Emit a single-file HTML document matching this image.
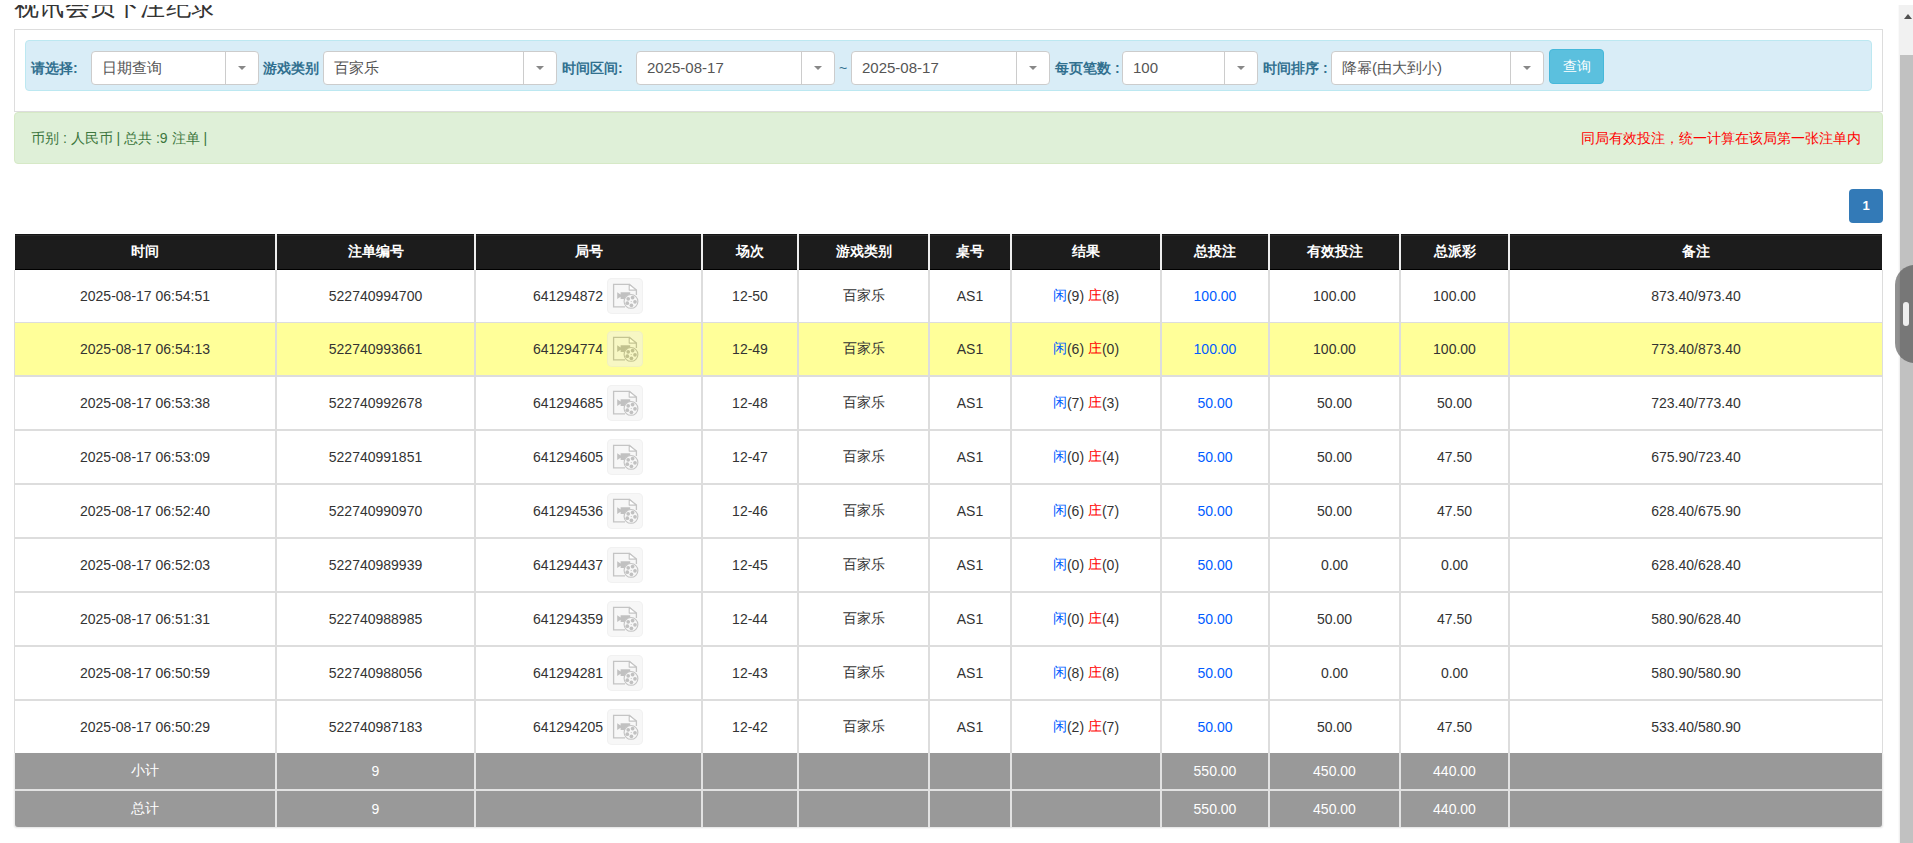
<!DOCTYPE html>
<html><head><meta charset="utf-8"><title>视讯会员下注纪录</title>
<style>
*{box-sizing:border-box;margin:0;padding:0}
html,body{width:1913px;height:843px;overflow:hidden;background:#fff}
body{position:relative;font-family:"Liberation Sans",sans-serif;font-size:14px;color:#333}
.a{position:absolute}
.title{left:14px;top:-9px;font-size:25px;letter-spacing:0.3px;line-height:30px;color:#333;white-space:nowrap}
.topmask{left:0;top:0;width:1898px;height:5px;background:#fff}
.panel{left:14px;top:29px;width:1869px;height:83px;border:1px solid #ddd;background:#fff}
.info{left:25px;top:40px;width:1847px;height:51px;background:#d9edf7;border:1px solid #bce8f1;border-radius:4px}
.lbl{top:60px;font-size:14px;font-weight:bold;color:#31708f;line-height:16px;white-space:nowrap}
.sel{top:51px;height:34px;background:#fff;border:1px solid #ccc;border-radius:4px}
.sel .v{position:absolute;left:10px;top:0;line-height:32px;font-size:15px;color:#555;white-space:nowrap}
.sel .dv{position:absolute;top:0;width:1px;height:32px;background:#ccc}
.sel .ar{position:absolute;top:14px;width:0;height:0;border-left:4px solid transparent;border-right:4px solid transparent;border-top:4px solid #888}
.btn{left:1549px;top:49px;width:55px;height:35px;background:#5bc0de;border:1px solid #46b8da;border-radius:4px;color:#fff;font-size:14px;line-height:33px;text-align:center}
.ok{left:14px;top:112px;width:1869px;height:52px;background:#dff0d8;border:1px solid #d6e9c6;border-radius:4px}
.okt{left:31px;top:129px;font-size:14px;color:#3c763d;line-height:18px;white-space:nowrap}
.red{right:52px;top:129px;font-size:14px;color:#f00;line-height:18px;white-space:nowrap}
.pg{left:1849px;top:189px;width:34px;height:34px;background:#337ab7;border-radius:4px;color:#fff;font-weight:bold;font-size:13px;line-height:34px;text-align:center}
.c{position:absolute;display:flex;align-items:center;justify-content:center;white-space:nowrap}
.hd{background:#1c1c1c;color:#fff;font-weight:bold;font-size:14px;box-shadow:inset 0 1px 0 #151515,inset 0 2px 0 #2a2a2a}
.wh{background:#fff}
.ye{background:#ffff99}
.gy{background:#999;color:#fff}
.bl{color:#005cff}
.rd{color:#f00}
.ic{position:relative;display:inline-block;width:36px;height:36px;margin-left:4px;margin-right:1px;border-radius:5px;background:#f0f0f0;box-shadow:inset 0 0 0 1px #e4e4e4;opacity:.5}
.ic svg{position:absolute;left:0;top:0}
.sb{left:1898px;top:5px;width:15px;height:838px;background:#f1f1f1;border-left:1px solid #fafafa}
.thumb{left:1900px;top:55px;width:13px;height:788px;background:#c1c1c1}
.arrow{left:1904px;top:14px;width:0;height:0;border-left:4.5px solid transparent;border-right:4.5px solid transparent;border-bottom:5px solid #505050}
.handle{left:1895px;top:265px;width:40px;height:98px;border-radius:20px;background:rgba(70,70,70,.6)}
.pill{left:1903px;top:302px;width:6px;height:24px;border-radius:3px;background:#eee}
</style></head><body>

<div class="a title">视讯会员下注纪录</div>
<div class="a topmask"></div>
<div class="a panel"></div>
<div class="a info"></div>
<div class="a lbl" style="left:31px">请选择:</div>
<div class="a lbl" style="left:263px">游戏类别</div>
<div class="a lbl" style="left:562px">时间区间:</div>
<div class="a lbl" style="left:839px;font-weight:normal">~</div>
<div class="a lbl" style="left:1055px">每页笔数 :</div>
<div class="a lbl" style="left:1263px">时间排序 :</div>
<div class="a sel" style="left:91px;width:168px"><span class="v">日期查询</span><span class="dv" style="left:133px"></span><span class="ar" style="left:146px"></span></div>
<div class="a sel" style="left:323px;width:234px"><span class="v">百家乐</span><span class="dv" style="left:199px"></span><span class="ar" style="left:212px"></span></div>
<div class="a sel" style="left:636px;width:199px"><span class="v">2025-08-17</span><span class="dv" style="left:164px"></span><span class="ar" style="left:177px"></span></div>
<div class="a sel" style="left:851px;width:199px"><span class="v">2025-08-17</span><span class="dv" style="left:164px"></span><span class="ar" style="left:177px"></span></div>
<div class="a sel" style="left:1122px;width:136px"><span class="v">100</span><span class="dv" style="left:101px"></span><span class="ar" style="left:114px"></span></div>
<div class="a sel" style="left:1331px;width:213px"><span class="v">降幂(由大到小)</span><span class="dv" style="left:178px"></span><span class="ar" style="left:191px"></span></div>
<div class="a btn">查询</div>
<div class="a ok"></div>
<div class="a okt">币别 : 人民币 | 总共 :9 注单 |</div>
<div class="a red">同局有效投注，统一计算在该局第一张注单内</div>
<div class="a pg">1</div>
<div class="a" style="left:15px;top:234px;width:1867px;height:36px;background:#eee"></div>
<div class="c hd" style="left:15px;top:234px;width:260px;height:36px;border-bottom:1px solid #000">时间</div>
<div class="c hd" style="left:277px;top:234px;width:197px;height:36px;border-bottom:1px solid #000">注单编号</div>
<div class="c hd" style="left:476px;top:234px;width:225px;height:36px;border-bottom:1px solid #000">局号</div>
<div class="c hd" style="left:703px;top:234px;width:94px;height:36px;border-bottom:1px solid #000">场次</div>
<div class="c hd" style="left:799px;top:234px;width:129px;height:36px;border-bottom:1px solid #000">游戏类别</div>
<div class="c hd" style="left:930px;top:234px;width:80px;height:36px;border-bottom:1px solid #000">桌号</div>
<div class="c hd" style="left:1012px;top:234px;width:148px;height:36px;border-bottom:1px solid #000">结果</div>
<div class="c hd" style="left:1162px;top:234px;width:106px;height:36px;border-bottom:1px solid #000">总投注</div>
<div class="c hd" style="left:1270px;top:234px;width:129px;height:36px;border-bottom:1px solid #000">有效投注</div>
<div class="c hd" style="left:1401px;top:234px;width:107px;height:36px;border-bottom:1px solid #000">总派彩</div>
<div class="c hd" style="left:1510px;top:234px;width:372px;height:36px;border-bottom:1px solid #000">备注</div>
<div class="a" style="left:14px;top:270px;width:1869px;height:483px;background:#ddd"></div>
<div class="c wh" style="left:15px;top:270px;width:260px;height:52px;">2025-08-17 06:54:51</div>
<div class="c wh" style="left:277px;top:270px;width:197px;height:52px;">522740994700</div>
<div class="c wh" style="left:476px;top:270px;width:225px;height:52px;">641294872<span class="ic"><svg width="36" height="36" viewBox="0 0 36 36"><path d="M6.6 6.3H22.2L29.4 12.1V28.9H6.6Z" fill="#f0f0f0"/><path d="M18 28.9H6.6V6.3H22.2L29.4 12.1V17" fill="none" stroke="#8a8a8a" stroke-width="1.3"/><path d="M22.2 6.3V12.1H29.4Z" fill="#ffffff" stroke="#8a8a8a" stroke-width="1.1" stroke-linejoin="round"/><path d="M10.2 14.2L13.6 16.4V14.2H23.2V21H13.6V18.8L10.2 21Z" fill="#858585"/><circle cx="24" cy="23.4" r="6.9" fill="#f0f0f0" stroke="#8a8a8a" stroke-width="1.1"/><circle cx="21.2" cy="20.8" r="1.85" fill="#858585"/><circle cx="25.6" cy="19.6" r="1.85" fill="#858585"/><circle cx="28" cy="23.8" r="1.85" fill="#858585"/><circle cx="24.4" cy="27.3" r="1.85" fill="#858585"/><circle cx="20.3" cy="25.2" r="1.85" fill="#858585"/><circle cx="24.2" cy="23.5" r="0.6" fill="#858585"/></svg></span></div>
<div class="c wh" style="left:703px;top:270px;width:94px;height:52px;">12-50</div>
<div class="c wh" style="left:799px;top:270px;width:129px;height:52px;">百家乐</div>
<div class="c wh" style="left:930px;top:270px;width:80px;height:52px;">AS1</div>
<div class="c wh" style="left:1012px;top:270px;width:148px;height:52px;"><span class="bl">闲</span>(9)&nbsp;<span class="rd">庄</span>(8)</div>
<div class="c wh" style="left:1162px;top:270px;width:106px;height:52px;"><span class="bl">100.00</span></div>
<div class="c wh" style="left:1270px;top:270px;width:129px;height:52px;">100.00</div>
<div class="c wh" style="left:1401px;top:270px;width:107px;height:52px;">100.00</div>
<div class="c wh" style="left:1510px;top:270px;width:372px;height:52px;">873.40/973.40</div>
<div class="c ye" style="left:15px;top:323px;width:260px;height:52px;">2025-08-17 06:54:13</div>
<div class="c ye" style="left:277px;top:323px;width:197px;height:52px;">522740993661</div>
<div class="c ye" style="left:476px;top:323px;width:225px;height:52px;">641294774<span class="ic"><svg width="36" height="36" viewBox="0 0 36 36"><path d="M6.6 6.3H22.2L29.4 12.1V28.9H6.6Z" fill="#f0f0f0"/><path d="M18 28.9H6.6V6.3H22.2L29.4 12.1V17" fill="none" stroke="#8a8a8a" stroke-width="1.3"/><path d="M22.2 6.3V12.1H29.4Z" fill="#ffffff" stroke="#8a8a8a" stroke-width="1.1" stroke-linejoin="round"/><path d="M10.2 14.2L13.6 16.4V14.2H23.2V21H13.6V18.8L10.2 21Z" fill="#858585"/><circle cx="24" cy="23.4" r="6.9" fill="#f0f0f0" stroke="#8a8a8a" stroke-width="1.1"/><circle cx="21.2" cy="20.8" r="1.85" fill="#858585"/><circle cx="25.6" cy="19.6" r="1.85" fill="#858585"/><circle cx="28" cy="23.8" r="1.85" fill="#858585"/><circle cx="24.4" cy="27.3" r="1.85" fill="#858585"/><circle cx="20.3" cy="25.2" r="1.85" fill="#858585"/><circle cx="24.2" cy="23.5" r="0.6" fill="#858585"/></svg></span></div>
<div class="c ye" style="left:703px;top:323px;width:94px;height:52px;">12-49</div>
<div class="c ye" style="left:799px;top:323px;width:129px;height:52px;">百家乐</div>
<div class="c ye" style="left:930px;top:323px;width:80px;height:52px;">AS1</div>
<div class="c ye" style="left:1012px;top:323px;width:148px;height:52px;"><span class="bl">闲</span>(6)&nbsp;<span class="rd">庄</span>(0)</div>
<div class="c ye" style="left:1162px;top:323px;width:106px;height:52px;"><span class="bl">100.00</span></div>
<div class="c ye" style="left:1270px;top:323px;width:129px;height:52px;">100.00</div>
<div class="c ye" style="left:1401px;top:323px;width:107px;height:52px;">100.00</div>
<div class="c ye" style="left:1510px;top:323px;width:372px;height:52px;">773.40/873.40</div>
<div class="c wh" style="left:15px;top:377px;width:260px;height:52px;">2025-08-17 06:53:38</div>
<div class="c wh" style="left:277px;top:377px;width:197px;height:52px;">522740992678</div>
<div class="c wh" style="left:476px;top:377px;width:225px;height:52px;">641294685<span class="ic"><svg width="36" height="36" viewBox="0 0 36 36"><path d="M6.6 6.3H22.2L29.4 12.1V28.9H6.6Z" fill="#f0f0f0"/><path d="M18 28.9H6.6V6.3H22.2L29.4 12.1V17" fill="none" stroke="#8a8a8a" stroke-width="1.3"/><path d="M22.2 6.3V12.1H29.4Z" fill="#ffffff" stroke="#8a8a8a" stroke-width="1.1" stroke-linejoin="round"/><path d="M10.2 14.2L13.6 16.4V14.2H23.2V21H13.6V18.8L10.2 21Z" fill="#858585"/><circle cx="24" cy="23.4" r="6.9" fill="#f0f0f0" stroke="#8a8a8a" stroke-width="1.1"/><circle cx="21.2" cy="20.8" r="1.85" fill="#858585"/><circle cx="25.6" cy="19.6" r="1.85" fill="#858585"/><circle cx="28" cy="23.8" r="1.85" fill="#858585"/><circle cx="24.4" cy="27.3" r="1.85" fill="#858585"/><circle cx="20.3" cy="25.2" r="1.85" fill="#858585"/><circle cx="24.2" cy="23.5" r="0.6" fill="#858585"/></svg></span></div>
<div class="c wh" style="left:703px;top:377px;width:94px;height:52px;">12-48</div>
<div class="c wh" style="left:799px;top:377px;width:129px;height:52px;">百家乐</div>
<div class="c wh" style="left:930px;top:377px;width:80px;height:52px;">AS1</div>
<div class="c wh" style="left:1012px;top:377px;width:148px;height:52px;"><span class="bl">闲</span>(7)&nbsp;<span class="rd">庄</span>(3)</div>
<div class="c wh" style="left:1162px;top:377px;width:106px;height:52px;"><span class="bl">50.00</span></div>
<div class="c wh" style="left:1270px;top:377px;width:129px;height:52px;">50.00</div>
<div class="c wh" style="left:1401px;top:377px;width:107px;height:52px;">50.00</div>
<div class="c wh" style="left:1510px;top:377px;width:372px;height:52px;">723.40/773.40</div>
<div class="c wh" style="left:15px;top:431px;width:260px;height:52px;">2025-08-17 06:53:09</div>
<div class="c wh" style="left:277px;top:431px;width:197px;height:52px;">522740991851</div>
<div class="c wh" style="left:476px;top:431px;width:225px;height:52px;">641294605<span class="ic"><svg width="36" height="36" viewBox="0 0 36 36"><path d="M6.6 6.3H22.2L29.4 12.1V28.9H6.6Z" fill="#f0f0f0"/><path d="M18 28.9H6.6V6.3H22.2L29.4 12.1V17" fill="none" stroke="#8a8a8a" stroke-width="1.3"/><path d="M22.2 6.3V12.1H29.4Z" fill="#ffffff" stroke="#8a8a8a" stroke-width="1.1" stroke-linejoin="round"/><path d="M10.2 14.2L13.6 16.4V14.2H23.2V21H13.6V18.8L10.2 21Z" fill="#858585"/><circle cx="24" cy="23.4" r="6.9" fill="#f0f0f0" stroke="#8a8a8a" stroke-width="1.1"/><circle cx="21.2" cy="20.8" r="1.85" fill="#858585"/><circle cx="25.6" cy="19.6" r="1.85" fill="#858585"/><circle cx="28" cy="23.8" r="1.85" fill="#858585"/><circle cx="24.4" cy="27.3" r="1.85" fill="#858585"/><circle cx="20.3" cy="25.2" r="1.85" fill="#858585"/><circle cx="24.2" cy="23.5" r="0.6" fill="#858585"/></svg></span></div>
<div class="c wh" style="left:703px;top:431px;width:94px;height:52px;">12-47</div>
<div class="c wh" style="left:799px;top:431px;width:129px;height:52px;">百家乐</div>
<div class="c wh" style="left:930px;top:431px;width:80px;height:52px;">AS1</div>
<div class="c wh" style="left:1012px;top:431px;width:148px;height:52px;"><span class="bl">闲</span>(0)&nbsp;<span class="rd">庄</span>(4)</div>
<div class="c wh" style="left:1162px;top:431px;width:106px;height:52px;"><span class="bl">50.00</span></div>
<div class="c wh" style="left:1270px;top:431px;width:129px;height:52px;">50.00</div>
<div class="c wh" style="left:1401px;top:431px;width:107px;height:52px;">47.50</div>
<div class="c wh" style="left:1510px;top:431px;width:372px;height:52px;">675.90/723.40</div>
<div class="c wh" style="left:15px;top:485px;width:260px;height:52px;">2025-08-17 06:52:40</div>
<div class="c wh" style="left:277px;top:485px;width:197px;height:52px;">522740990970</div>
<div class="c wh" style="left:476px;top:485px;width:225px;height:52px;">641294536<span class="ic"><svg width="36" height="36" viewBox="0 0 36 36"><path d="M6.6 6.3H22.2L29.4 12.1V28.9H6.6Z" fill="#f0f0f0"/><path d="M18 28.9H6.6V6.3H22.2L29.4 12.1V17" fill="none" stroke="#8a8a8a" stroke-width="1.3"/><path d="M22.2 6.3V12.1H29.4Z" fill="#ffffff" stroke="#8a8a8a" stroke-width="1.1" stroke-linejoin="round"/><path d="M10.2 14.2L13.6 16.4V14.2H23.2V21H13.6V18.8L10.2 21Z" fill="#858585"/><circle cx="24" cy="23.4" r="6.9" fill="#f0f0f0" stroke="#8a8a8a" stroke-width="1.1"/><circle cx="21.2" cy="20.8" r="1.85" fill="#858585"/><circle cx="25.6" cy="19.6" r="1.85" fill="#858585"/><circle cx="28" cy="23.8" r="1.85" fill="#858585"/><circle cx="24.4" cy="27.3" r="1.85" fill="#858585"/><circle cx="20.3" cy="25.2" r="1.85" fill="#858585"/><circle cx="24.2" cy="23.5" r="0.6" fill="#858585"/></svg></span></div>
<div class="c wh" style="left:703px;top:485px;width:94px;height:52px;">12-46</div>
<div class="c wh" style="left:799px;top:485px;width:129px;height:52px;">百家乐</div>
<div class="c wh" style="left:930px;top:485px;width:80px;height:52px;">AS1</div>
<div class="c wh" style="left:1012px;top:485px;width:148px;height:52px;"><span class="bl">闲</span>(6)&nbsp;<span class="rd">庄</span>(7)</div>
<div class="c wh" style="left:1162px;top:485px;width:106px;height:52px;"><span class="bl">50.00</span></div>
<div class="c wh" style="left:1270px;top:485px;width:129px;height:52px;">50.00</div>
<div class="c wh" style="left:1401px;top:485px;width:107px;height:52px;">47.50</div>
<div class="c wh" style="left:1510px;top:485px;width:372px;height:52px;">628.40/675.90</div>
<div class="c wh" style="left:15px;top:539px;width:260px;height:52px;">2025-08-17 06:52:03</div>
<div class="c wh" style="left:277px;top:539px;width:197px;height:52px;">522740989939</div>
<div class="c wh" style="left:476px;top:539px;width:225px;height:52px;">641294437<span class="ic"><svg width="36" height="36" viewBox="0 0 36 36"><path d="M6.6 6.3H22.2L29.4 12.1V28.9H6.6Z" fill="#f0f0f0"/><path d="M18 28.9H6.6V6.3H22.2L29.4 12.1V17" fill="none" stroke="#8a8a8a" stroke-width="1.3"/><path d="M22.2 6.3V12.1H29.4Z" fill="#ffffff" stroke="#8a8a8a" stroke-width="1.1" stroke-linejoin="round"/><path d="M10.2 14.2L13.6 16.4V14.2H23.2V21H13.6V18.8L10.2 21Z" fill="#858585"/><circle cx="24" cy="23.4" r="6.9" fill="#f0f0f0" stroke="#8a8a8a" stroke-width="1.1"/><circle cx="21.2" cy="20.8" r="1.85" fill="#858585"/><circle cx="25.6" cy="19.6" r="1.85" fill="#858585"/><circle cx="28" cy="23.8" r="1.85" fill="#858585"/><circle cx="24.4" cy="27.3" r="1.85" fill="#858585"/><circle cx="20.3" cy="25.2" r="1.85" fill="#858585"/><circle cx="24.2" cy="23.5" r="0.6" fill="#858585"/></svg></span></div>
<div class="c wh" style="left:703px;top:539px;width:94px;height:52px;">12-45</div>
<div class="c wh" style="left:799px;top:539px;width:129px;height:52px;">百家乐</div>
<div class="c wh" style="left:930px;top:539px;width:80px;height:52px;">AS1</div>
<div class="c wh" style="left:1012px;top:539px;width:148px;height:52px;"><span class="bl">闲</span>(0)&nbsp;<span class="rd">庄</span>(0)</div>
<div class="c wh" style="left:1162px;top:539px;width:106px;height:52px;"><span class="bl">50.00</span></div>
<div class="c wh" style="left:1270px;top:539px;width:129px;height:52px;">0.00</div>
<div class="c wh" style="left:1401px;top:539px;width:107px;height:52px;">0.00</div>
<div class="c wh" style="left:1510px;top:539px;width:372px;height:52px;">628.40/628.40</div>
<div class="c wh" style="left:15px;top:593px;width:260px;height:52px;">2025-08-17 06:51:31</div>
<div class="c wh" style="left:277px;top:593px;width:197px;height:52px;">522740988985</div>
<div class="c wh" style="left:476px;top:593px;width:225px;height:52px;">641294359<span class="ic"><svg width="36" height="36" viewBox="0 0 36 36"><path d="M6.6 6.3H22.2L29.4 12.1V28.9H6.6Z" fill="#f0f0f0"/><path d="M18 28.9H6.6V6.3H22.2L29.4 12.1V17" fill="none" stroke="#8a8a8a" stroke-width="1.3"/><path d="M22.2 6.3V12.1H29.4Z" fill="#ffffff" stroke="#8a8a8a" stroke-width="1.1" stroke-linejoin="round"/><path d="M10.2 14.2L13.6 16.4V14.2H23.2V21H13.6V18.8L10.2 21Z" fill="#858585"/><circle cx="24" cy="23.4" r="6.9" fill="#f0f0f0" stroke="#8a8a8a" stroke-width="1.1"/><circle cx="21.2" cy="20.8" r="1.85" fill="#858585"/><circle cx="25.6" cy="19.6" r="1.85" fill="#858585"/><circle cx="28" cy="23.8" r="1.85" fill="#858585"/><circle cx="24.4" cy="27.3" r="1.85" fill="#858585"/><circle cx="20.3" cy="25.2" r="1.85" fill="#858585"/><circle cx="24.2" cy="23.5" r="0.6" fill="#858585"/></svg></span></div>
<div class="c wh" style="left:703px;top:593px;width:94px;height:52px;">12-44</div>
<div class="c wh" style="left:799px;top:593px;width:129px;height:52px;">百家乐</div>
<div class="c wh" style="left:930px;top:593px;width:80px;height:52px;">AS1</div>
<div class="c wh" style="left:1012px;top:593px;width:148px;height:52px;"><span class="bl">闲</span>(0)&nbsp;<span class="rd">庄</span>(4)</div>
<div class="c wh" style="left:1162px;top:593px;width:106px;height:52px;"><span class="bl">50.00</span></div>
<div class="c wh" style="left:1270px;top:593px;width:129px;height:52px;">50.00</div>
<div class="c wh" style="left:1401px;top:593px;width:107px;height:52px;">47.50</div>
<div class="c wh" style="left:1510px;top:593px;width:372px;height:52px;">580.90/628.40</div>
<div class="c wh" style="left:15px;top:647px;width:260px;height:52px;">2025-08-17 06:50:59</div>
<div class="c wh" style="left:277px;top:647px;width:197px;height:52px;">522740988056</div>
<div class="c wh" style="left:476px;top:647px;width:225px;height:52px;">641294281<span class="ic"><svg width="36" height="36" viewBox="0 0 36 36"><path d="M6.6 6.3H22.2L29.4 12.1V28.9H6.6Z" fill="#f0f0f0"/><path d="M18 28.9H6.6V6.3H22.2L29.4 12.1V17" fill="none" stroke="#8a8a8a" stroke-width="1.3"/><path d="M22.2 6.3V12.1H29.4Z" fill="#ffffff" stroke="#8a8a8a" stroke-width="1.1" stroke-linejoin="round"/><path d="M10.2 14.2L13.6 16.4V14.2H23.2V21H13.6V18.8L10.2 21Z" fill="#858585"/><circle cx="24" cy="23.4" r="6.9" fill="#f0f0f0" stroke="#8a8a8a" stroke-width="1.1"/><circle cx="21.2" cy="20.8" r="1.85" fill="#858585"/><circle cx="25.6" cy="19.6" r="1.85" fill="#858585"/><circle cx="28" cy="23.8" r="1.85" fill="#858585"/><circle cx="24.4" cy="27.3" r="1.85" fill="#858585"/><circle cx="20.3" cy="25.2" r="1.85" fill="#858585"/><circle cx="24.2" cy="23.5" r="0.6" fill="#858585"/></svg></span></div>
<div class="c wh" style="left:703px;top:647px;width:94px;height:52px;">12-43</div>
<div class="c wh" style="left:799px;top:647px;width:129px;height:52px;">百家乐</div>
<div class="c wh" style="left:930px;top:647px;width:80px;height:52px;">AS1</div>
<div class="c wh" style="left:1012px;top:647px;width:148px;height:52px;"><span class="bl">闲</span>(8)&nbsp;<span class="rd">庄</span>(8)</div>
<div class="c wh" style="left:1162px;top:647px;width:106px;height:52px;"><span class="bl">50.00</span></div>
<div class="c wh" style="left:1270px;top:647px;width:129px;height:52px;">0.00</div>
<div class="c wh" style="left:1401px;top:647px;width:107px;height:52px;">0.00</div>
<div class="c wh" style="left:1510px;top:647px;width:372px;height:52px;">580.90/580.90</div>
<div class="c wh" style="left:15px;top:701px;width:260px;height:52px;">2025-08-17 06:50:29</div>
<div class="c wh" style="left:277px;top:701px;width:197px;height:52px;">522740987183</div>
<div class="c wh" style="left:476px;top:701px;width:225px;height:52px;">641294205<span class="ic"><svg width="36" height="36" viewBox="0 0 36 36"><path d="M6.6 6.3H22.2L29.4 12.1V28.9H6.6Z" fill="#f0f0f0"/><path d="M18 28.9H6.6V6.3H22.2L29.4 12.1V17" fill="none" stroke="#8a8a8a" stroke-width="1.3"/><path d="M22.2 6.3V12.1H29.4Z" fill="#ffffff" stroke="#8a8a8a" stroke-width="1.1" stroke-linejoin="round"/><path d="M10.2 14.2L13.6 16.4V14.2H23.2V21H13.6V18.8L10.2 21Z" fill="#858585"/><circle cx="24" cy="23.4" r="6.9" fill="#f0f0f0" stroke="#8a8a8a" stroke-width="1.1"/><circle cx="21.2" cy="20.8" r="1.85" fill="#858585"/><circle cx="25.6" cy="19.6" r="1.85" fill="#858585"/><circle cx="28" cy="23.8" r="1.85" fill="#858585"/><circle cx="24.4" cy="27.3" r="1.85" fill="#858585"/><circle cx="20.3" cy="25.2" r="1.85" fill="#858585"/><circle cx="24.2" cy="23.5" r="0.6" fill="#858585"/></svg></span></div>
<div class="c wh" style="left:703px;top:701px;width:94px;height:52px;">12-42</div>
<div class="c wh" style="left:799px;top:701px;width:129px;height:52px;">百家乐</div>
<div class="c wh" style="left:930px;top:701px;width:80px;height:52px;">AS1</div>
<div class="c wh" style="left:1012px;top:701px;width:148px;height:52px;"><span class="bl">闲</span>(2)&nbsp;<span class="rd">庄</span>(7)</div>
<div class="c wh" style="left:1162px;top:701px;width:106px;height:52px;"><span class="bl">50.00</span></div>
<div class="c wh" style="left:1270px;top:701px;width:129px;height:52px;">50.00</div>
<div class="c wh" style="left:1401px;top:701px;width:107px;height:52px;">47.50</div>
<div class="c wh" style="left:1510px;top:701px;width:372px;height:52px;">533.40/580.90</div>
<div class="a" style="left:14px;top:753px;width:1869px;height:74px;background:#e2e2e2;border-left:1px solid #ececec;border-right:1px solid #ececec;border-radius:0 0 3px 3px;box-shadow:0 1px 2px rgba(0,0,0,.12)"></div>
<div class="c gy" style="left:15px;top:753px;width:260px;height:36px;">小计</div>
<div class="c gy" style="left:277px;top:753px;width:197px;height:36px;">9</div>
<div class="c gy" style="left:476px;top:753px;width:225px;height:36px;"></div>
<div class="c gy" style="left:703px;top:753px;width:94px;height:36px;"></div>
<div class="c gy" style="left:799px;top:753px;width:129px;height:36px;"></div>
<div class="c gy" style="left:930px;top:753px;width:80px;height:36px;"></div>
<div class="c gy" style="left:1012px;top:753px;width:148px;height:36px;"></div>
<div class="c gy" style="left:1162px;top:753px;width:106px;height:36px;">550.00</div>
<div class="c gy" style="left:1270px;top:753px;width:129px;height:36px;">450.00</div>
<div class="c gy" style="left:1401px;top:753px;width:107px;height:36px;">440.00</div>
<div class="c gy" style="left:1510px;top:753px;width:372px;height:36px;"></div>
<div class="c gy" style="left:15px;top:791px;width:260px;height:36px;border-bottom-left-radius:3px">总计</div>
<div class="c gy" style="left:277px;top:791px;width:197px;height:36px;">9</div>
<div class="c gy" style="left:476px;top:791px;width:225px;height:36px;"></div>
<div class="c gy" style="left:703px;top:791px;width:94px;height:36px;"></div>
<div class="c gy" style="left:799px;top:791px;width:129px;height:36px;"></div>
<div class="c gy" style="left:930px;top:791px;width:80px;height:36px;"></div>
<div class="c gy" style="left:1012px;top:791px;width:148px;height:36px;"></div>
<div class="c gy" style="left:1162px;top:791px;width:106px;height:36px;">550.00</div>
<div class="c gy" style="left:1270px;top:791px;width:129px;height:36px;">450.00</div>
<div class="c gy" style="left:1401px;top:791px;width:107px;height:36px;">440.00</div>
<div class="c gy" style="left:1510px;top:791px;width:372px;height:36px;border-bottom-right-radius:3px"></div>
<div class="a sb"></div><div class="a thumb"></div><div class="a arrow"></div>
<div class="a handle"></div><div class="a pill"></div>
</body></html>
